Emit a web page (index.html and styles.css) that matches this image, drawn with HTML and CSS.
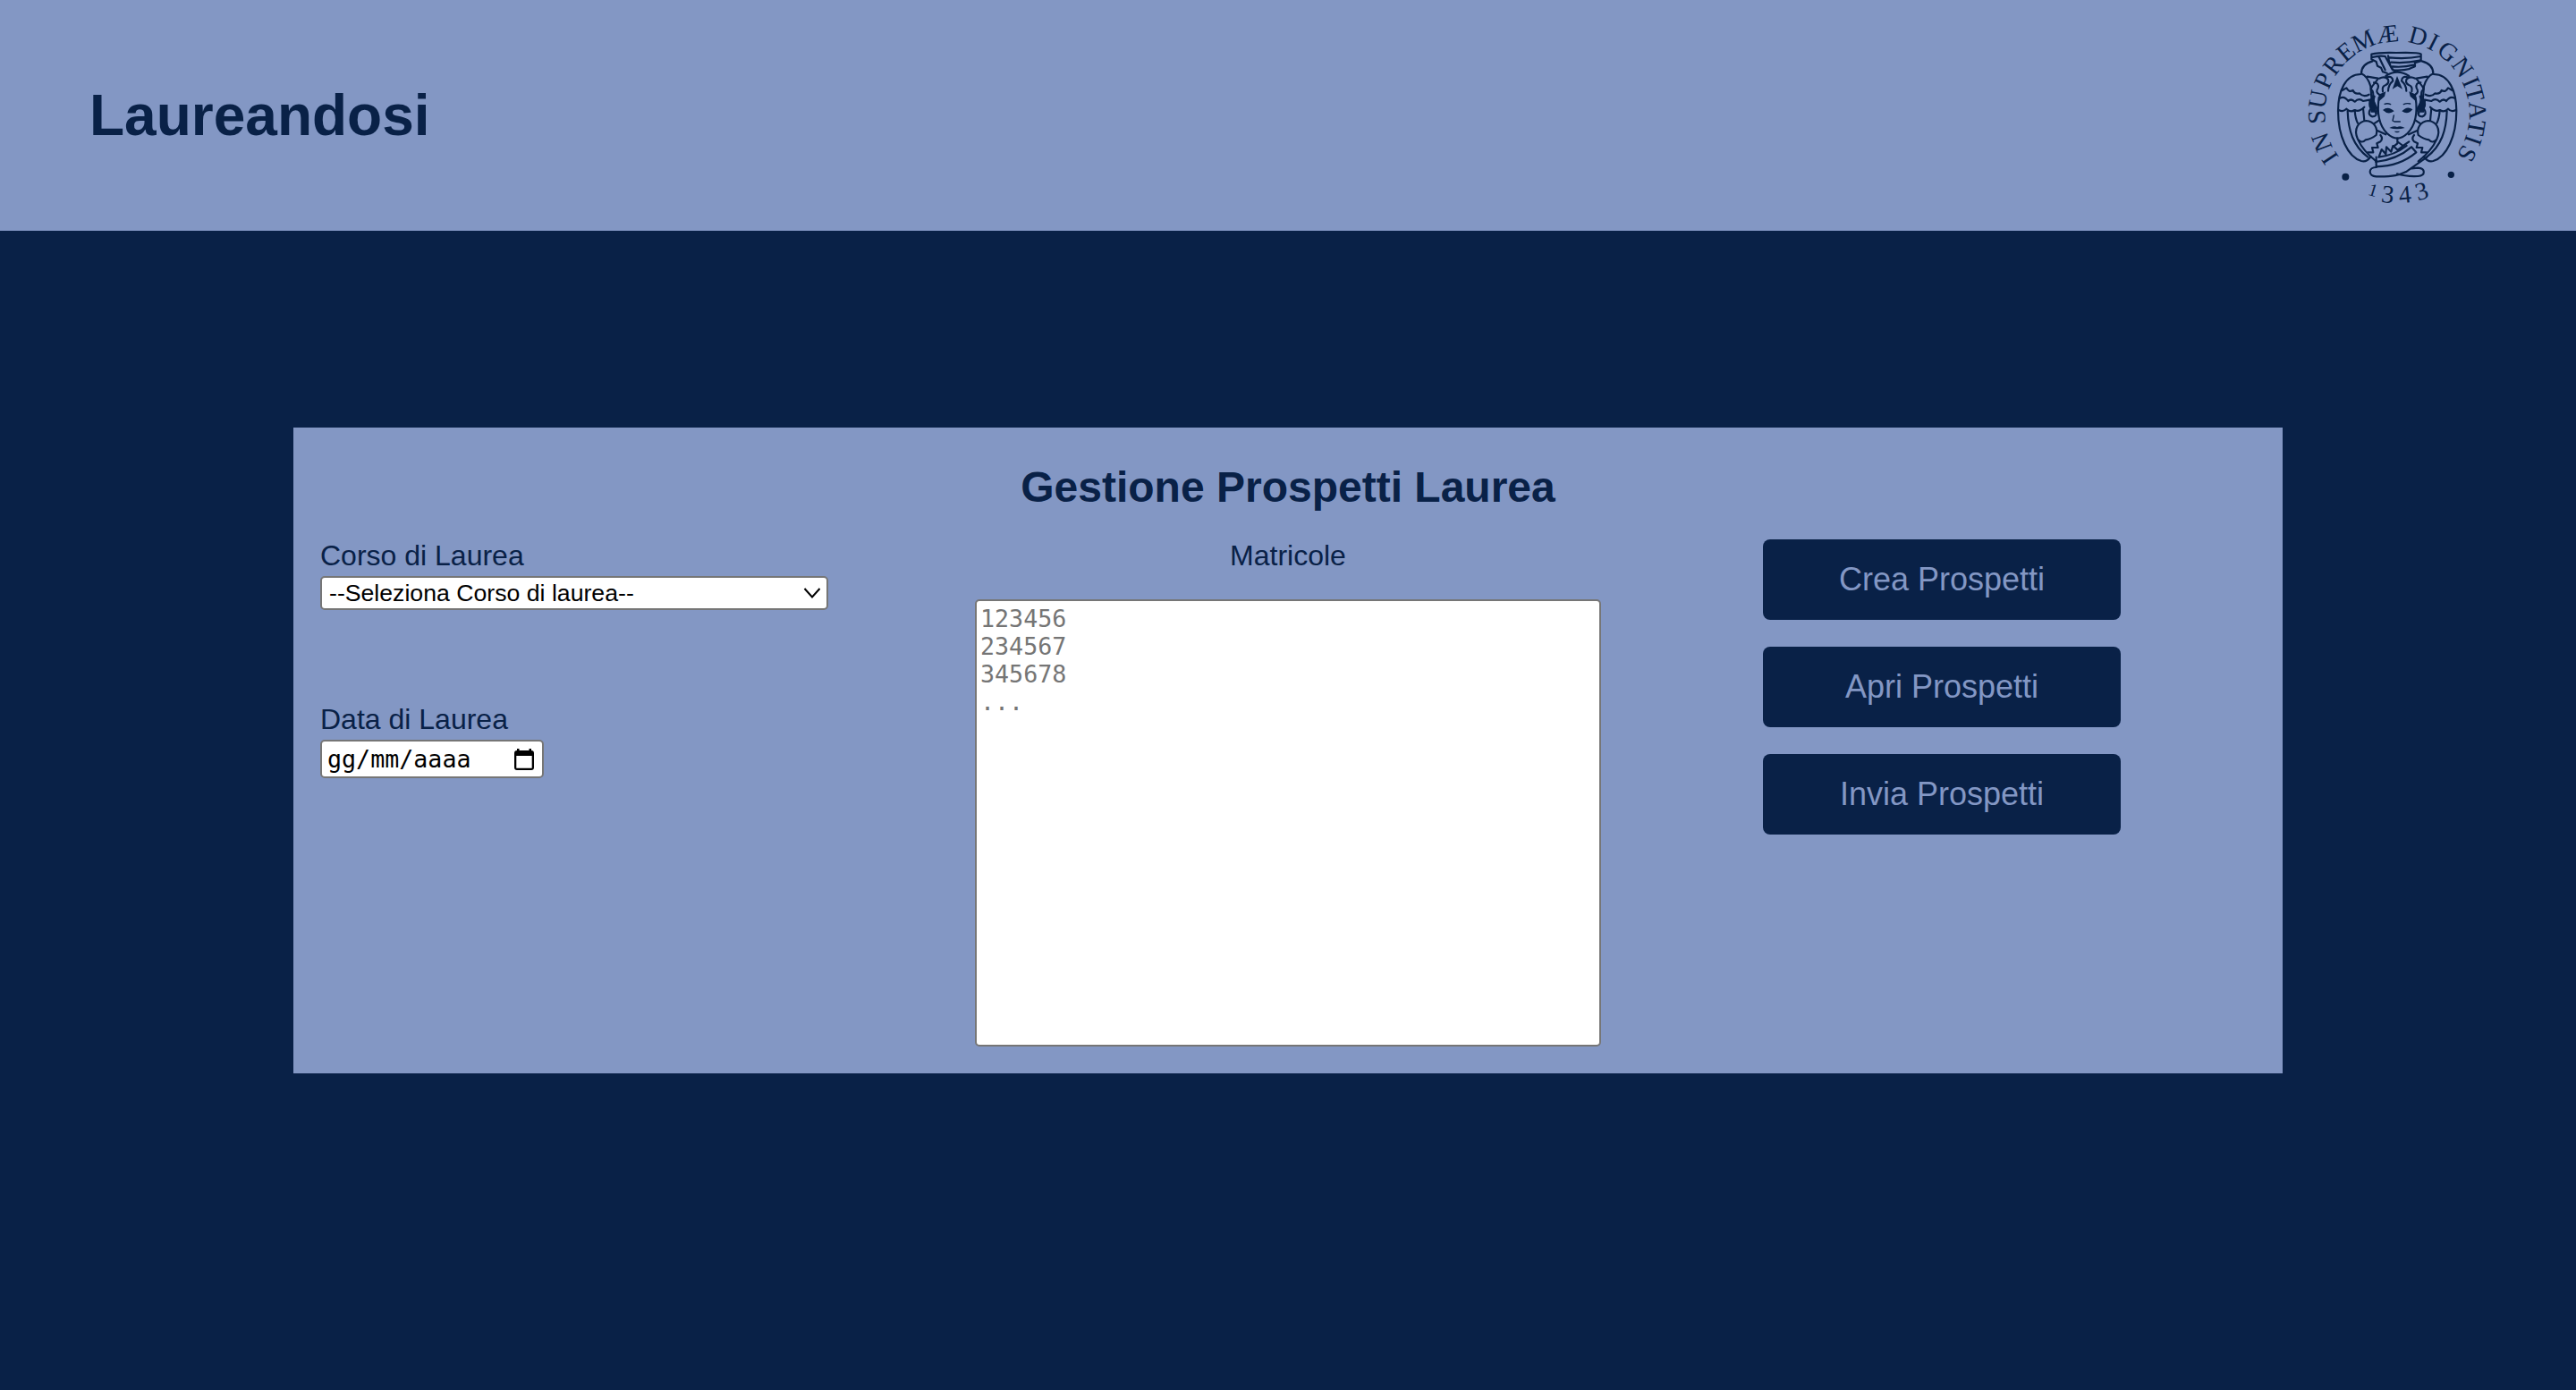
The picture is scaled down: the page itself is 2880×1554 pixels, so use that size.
FILE: index.html
```html
<!DOCTYPE html>
<html lang="it">
<head>
<meta charset="utf-8">
<title>Laureandosi</title>
<link rel="stylesheet" href="styles.css">
</head>
<body>
<header class="topbar">
  <h1 class="brand">Laureandosi</h1>
  <svg class="seal" viewBox="0 0 720 720" aria-hidden="true">
    <defs>
      <g id="half">
        <!-- wing outline and shoulder -->
        <path d="M238 222C186 222 162 280 162 345C162 430 195 500 240 513C256 517 264 508 272 498"/>
        <path d="M240 220C240 198 254 184 278 178M240 220C256 226 264 240 271 262L274 300M260 230L296 236C292 248 278 254 272 272"/>
        <!-- feather rows -->
        <path d="M176 276L190 268Q198 284 212 276Q218 290 234 286Q246 300 266 290"/>
        <path d="M168 302Q184 294 196 312Q206 302 218 314Q232 300 246 312L268 308"/>
        <path d="M164 342Q180 350 190 338Q204 352 218 342Q232 350 250 332"/>
        <path d="M194 346C196 410 212 462 262 500M218 344Q220 372 228 386M246 336L250 378"/>
        <!-- lower wing -->
        <path d="M228 440C212 404 232 380 256 378C284 380 296 404 290 426M228 440Q242 456 254 442Q272 440 290 426M228 440Q246 480 290 514M282 388L300 376M292 410L322 424"/>
        <path d="M304 426Q314 438 304 448L292 454L296 468L276 468L280 484L262 484"/>
        <!-- face contour -->
        <path d="M299 300C292 350 298 392 326 420Q344 437 361 437"/>
        <!-- side curls -->
        <path d="M276 300Q262 322 272 336Q258 356 276 364Q294 364 290 346M284 296Q276 316 290 332Q296 342 288 352M272 272Q284 282 278 300M282 250Q300 250 296 268Q286 282 300 290M300 236Q320 226 330 240Q334 252 322 258Q308 262 312 280M326 232Q344 226 346 244Q330 258 330 278"/>
      </g>
    </defs>
    <g class="seal-lines">
      <use href="#half"/>
      <use href="#half" transform="matrix(-1 0 0 1 721 0)"/>
      <!-- crown -->
      <path d="M274 155Q300 148 358 150Q430 148 440 154V178L420 184V196L400 204M274 155V172L290 180L294 194L306 200L312 214L326 218M298 162L320 208M274 166Q300 158 320 162L344 206M330 160Q334 200 352 212M334 166Q390 172 440 162M340 182Q390 186 436 176M344 196Q380 200 418 190M346 208Q380 210 402 204M322 228Q360 202 400 228"/>
      <!-- sash and base -->
      <path d="M361 438V454L346 466M364 450L380 462L400 448M288 516Q360 508 408 466M290 532Q370 530 424 484M298 500Q350 494 392 462M408 466L424 484M290 500V534M300 496L308 474L322 490L324 466L340 482L346 462L362 476L380 462"/>
      <path d="M290 534C262 534 262 564 290 565C350 566 366 560 392 548L460 500M360 556Q390 566 430 564C456 562 456 538 430 536L408 538"/>
    </g>
    <g class="seal-fill">
      <path d="M298 290L322 280L318 296L300 312ZM424 290L400 280L404 296L422 312ZM344 272L360 228L378 272L361 262ZM264 308L280 300L292 330L288 350L272 350ZM457 308L441 300L430 330L434 350L450 350Z"/>
      <path d="M312 342Q330 326 350 346Q330 360 312 342ZM376 346Q394 326 412 340Q396 360 376 346Z"/>
      <path d="M334 402Q348 394 360 399Q372 394 386 402Q360 410 334 402ZM350 413H370Q360 422 350 413Z"/>
      <circle cx="187" cy="566" r="12"/>
      <circle cx="541" cy="559" r="11"/>
    </g>
    <path class="seal-thin" d="M318 322Q328 318 338 323M382 323Q392 318 404 321M349 360L345 378L351 381H370"/>
    <g class="seal-text">
      <g transform="translate(360 355)">
        <text transform="rotate(-123.5) translate(0 -242)">I</text>
        <text transform="rotate(-110.7) translate(0 -242)">N</text>
        <text transform="rotate(-92.3) translate(0 -242)">S</text>
        <text transform="rotate(-79.5) translate(0 -242)">U</text>
        <text transform="rotate(-65.5) translate(0 -242)">P</text>
        <text transform="rotate(-52.5) translate(0 -242)">R</text>
        <text transform="rotate(-39.5) translate(0 -242)">E</text>
        <text transform="rotate(-24.8) translate(0 -242)">M</text>
        <text transform="rotate(-6.8) translate(0 -242)">Æ</text>
        <text transform="rotate(15.2) translate(0 -242)">D</text>
        <text transform="rotate(26.9) translate(0 -242)">I</text>
        <text transform="rotate(39.2) translate(0 -242)">G</text>
        <text transform="rotate(54.4) translate(0 -242)">N</text>
        <text transform="rotate(66.6) translate(0 -242)">I</text>
        <text transform="rotate(75.2) translate(0 -242)">T</text>
        <text transform="rotate(87.6) translate(0 -242)">A</text>
        <text transform="rotate(99.8) translate(0 -242)">T</text>
        <text transform="rotate(109.2) translate(0 -242)">I</text>
        <text transform="rotate(119.7) translate(0 -242)">S</text>
      </g>
      <text class="small" transform="translate(274 630) rotate(17)">1</text>
      <text transform="translate(325 653) rotate(7)">3</text>
      <text transform="translate(389 653) rotate(-6)">4</text>
      <text transform="translate(450 641) rotate(-16)">3</text>
    </g>
  </svg>
</header>
<main class="page">
  <form class="panel">
    <h2 class="panel-title">Gestione Prospetti Laurea</h2>
    <div class="columns">
      <div class="column column-left">
        <label class="label" for="corso">Corso di Laurea</label>
        <div class="field field-select">
          <span id="corso">--Seleziona Corso di laurea--</span>
          <svg class="chevron" viewBox="0 0 20 14"><path d="M1.5 2L10 11.5L18.500 2"/></svg>
        </div>
        <label class="label label-date" for="data">Data di Laurea</label>
        <div class="field field-date">
          <span id="data">gg/mm/aaaa</span>
          <svg class="calendar" viewBox="0 0 22 24"><path fill-rule="evenodd" d="M3 0H5.500V2H16.500V0H19V2Q22 2 22 5V21Q22 24 19 24H3Q0 24 0 21V5Q0 2 3 2ZM2.300 8V21.700H19.700V8Z"/></svg>
        </div>
      </div>
      <div class="column column-mid">
        <label class="label" for="matricole">Matricole</label>
        <textarea class="matricole" id="matricole" spellcheck="false">123456
234567
345678
...</textarea>
      </div>
      <div class="column column-right">
        <button class="button" type="button">Crea Prospetti</button>
        <button class="button" type="button">Apri Prospetti</button>
        <button class="button" type="button">Invia Prospetti</button>
      </div>
    </div>
  </form>
</main>
</body>
</html>
```
FILE: styles.css
```css
* {
  box-sizing: border-box;
}

body {
  margin: 0;
  min-height: 1554px;
  background: #092147;
  color: #092147;
  font-family: "Liberation Sans", Arial, Helvetica, sans-serif;
  font-size: 32px;
}

.topbar {
  display: flex;
  align-items: center;
  justify-content: space-between;
  height: 258px;
  padding: 0 80px 0 100px;
  background: #8397c4;
}

.brand {
  margin: 0;
  font-size: 64px;
  line-height: 74px;
}

.seal {
  width: 240px;
  height: 240px;
}

.seal-lines,
.seal-thin {
  fill: none;
  stroke: #092147;
  stroke-width: 6.5;
  stroke-linejoin: round;
  stroke-linecap: round;
}

.seal-thin {
  stroke-width: 4;
}

.seal-fill,
.seal-text {
  fill: #092147;
}

.seal-text {
  font-family: "Liberation Serif", "Times New Roman", serif;
  font-size: 84px;
  text-anchor: middle;
}

.seal-text .small {
  font-size: 60px;
}

.page {
  padding: 220px 328px 0;
}

.panel {
  height: 722px;
  padding: 40px 30px 30px;
  background: #8397c4;
}

.panel-title {
  margin: 0;
  font-size: 48px;
  line-height: 54px;
  text-align: center;
}

.columns {
  display: grid;
  grid-template-columns: 568px 700px 400px;
  column-gap: 164px;
  padding-top: 31px;
}

.column {
  display: flex;
  flex-direction: column;
  align-items: flex-start;
}

.column-mid {
  align-items: center;
}

.column-right {
  gap: 30px;
  margin-left: 17px;
}

.label {
  line-height: 37px;
}

.label-date {
  margin-top: 104px;
}

.field {
  display: flex;
  align-items: center;
  justify-content: space-between;
  border: 2px solid #767676;
  border-radius: 5px;
  background: #fff;
  color: #000;
  font-size: 26.667px;
}

.field-select {
  width: 568px;
  height: 38px;
  margin-top: 4px;
  padding: 0 6px 0 8px;
}

.chevron {
  width: 20px;
  height: 14px;
  fill: none;
  stroke: #000;
  stroke-width: 2;
}

.field-date {
  width: 250px;
  height: 43px;
  margin-top: 4px;
  padding: 0 9px 0 6px;
  font-family: "DejaVu Sans Mono", monospace;
}

.calendar {
  width: 22px;
  height: 24px;
}

.matricole {
  width: 700px;
  height: 500px;
  margin: 30px 0 0;
  padding: 4px;
  border: 2px solid #767676;
  border-radius: 5px;
  background: #fff;
  color: #757575;
  font: 26.667px/31px "DejaVu Sans Mono", monospace;
  resize: none;
}

.button {
  width: 400px;
  height: 90px;
  padding: 0;
  border: 0;
  border-radius: 8px;
  background: #092147;
  color: #8397c4;
  font: 36px "Liberation Sans", Arial, sans-serif;
}
```
